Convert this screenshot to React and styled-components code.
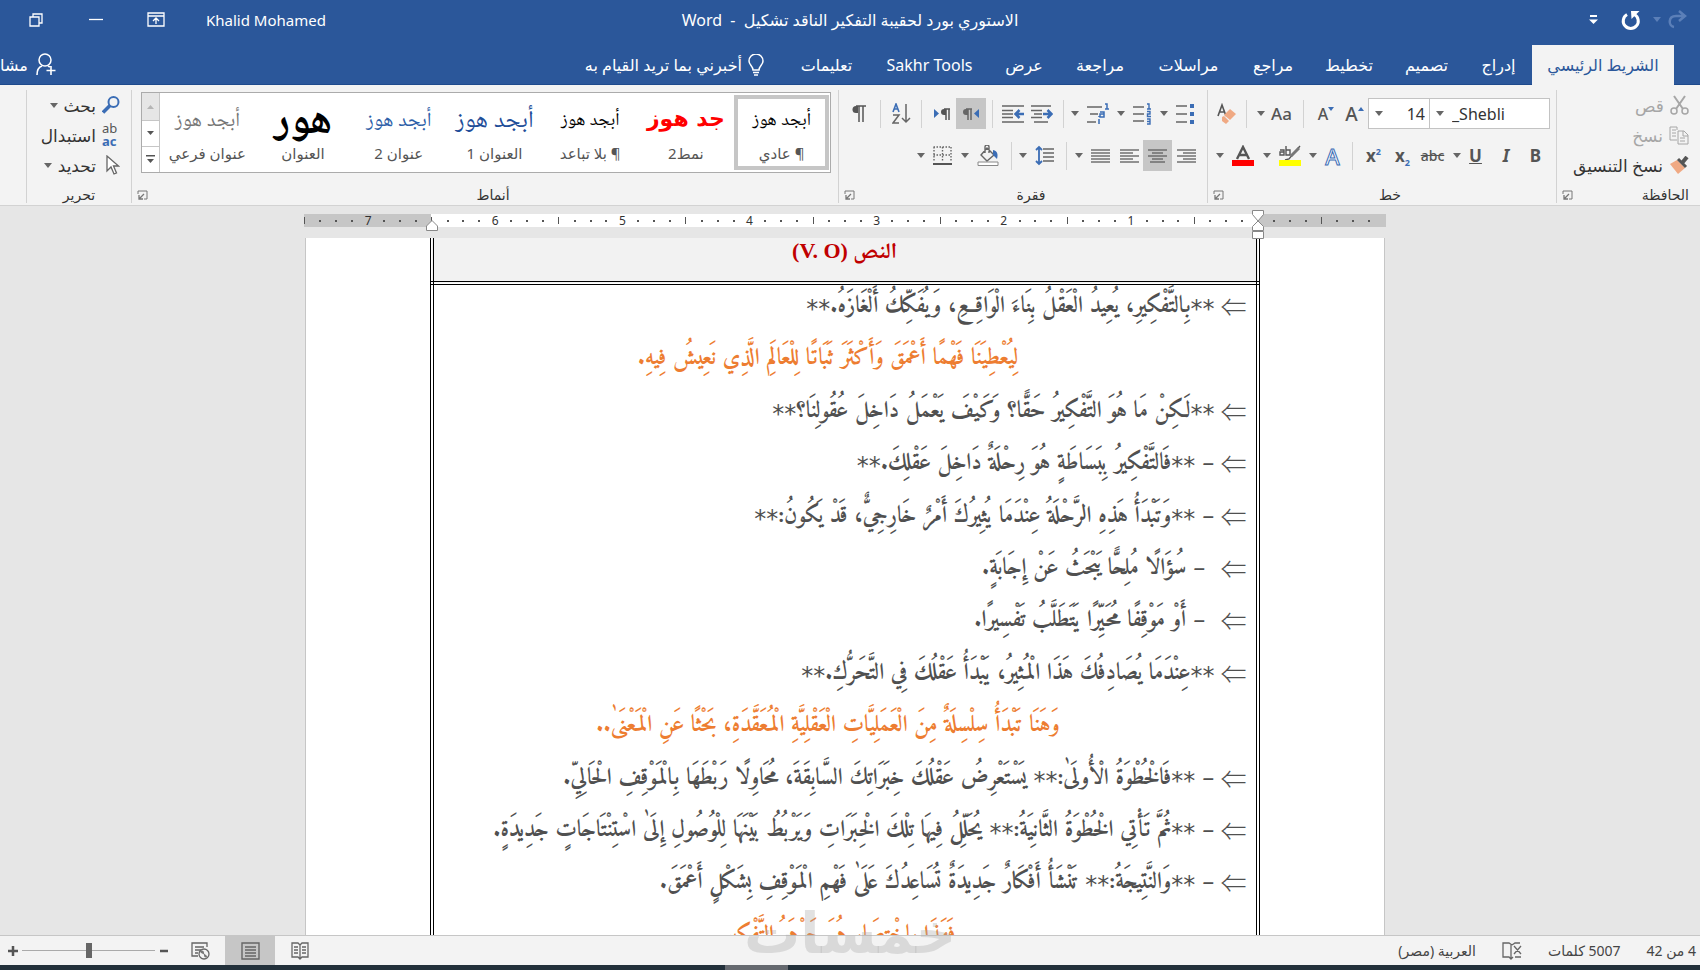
import { useState } from "react";
import styled, { createGlobalStyle } from "styled-components";

const GlobalStyle = createGlobalStyle`
  * {
    box-sizing: border-box;
  }
  body {
    margin: 0;
    overflow: hidden;
    font-family: "Noto Sans", "DejaVu Sans", sans-serif;
    font-size: 15px;
    color: #333;
  }
  button, select, input {
    font: inherit;
    color: inherit;
    margin: 0;
    padding: 0;
    border: none;
    background: none;
  }
`;

const tabs = [
  { label: "الشريط الرئيسي", width: 142 },
  { label: "إدراج", width: 67 },
  { label: "تصميم", width: 77 },
  { label: "تخطيط", width: 78 },
  { label: "مراجع", width: 74 },
  { label: "مراسلات", width: 95 },
  { label: "مراجعة", width: 82 },
  { label: "عرض", width: 70 },
  { label: "Sakhr Tools", width: 119 },
  { label: "تعليمات", width: 87 },
];

const styleItems = [
  { sample: "أبجد هوز", name: "¶ عادي", color: "#000", size: 18 },
  { sample: "جد هوز", name: "نمط2", color: "#f00", size: 22, sans: true },
  { sample: "أبجد هوز", name: "¶ بلا تباعد", color: "#000", size: 18 },
  { sample: "أبجد هوز", name: "العنوان 1", color: "#1f4e99", size: 24 },
  { sample: "أبجد هوز", name: "عنوان 2", color: "#2e5fa8", size: 20 },
  { sample: "هور", name: "العنوان", color: "#000", size: 42, bold: true },
  { sample: "أبجد هوز", name: "عنوان فرعي", color: "#767676", size: 20 },
];

const lines = [
  { text: "**بِالتَّفْكِيرِ، يُعِيدُ الْعَقْلُ بِنَاءَ الْوَاقِعِ، وَيُفَكِّكُ أَلْغَازَهُ.**" },
  { accent: true, text: "لِيُعْطِيَنَا فَهْمًا أَعْمَقَ وَأَكْثَرَ ثَبَاتًا لِلْعَالَمِ الَّذِي نَعِيشُ فِيهِ." },
  { text: "**لَكِنْ مَا هُوَ التَّفْكِيرُ حَقًّا؟ وَكَيْفَ يَعْمَلُ دَاخِلَ عُقُولِنَا؟**" },
  { text: "– **فَالتَّفْكِيرُ بِبَسَاطَةٍ هُوَ رِحْلَةٌ دَاخِلَ عَقْلِكَ.**" },
  { text: "– **وَتَبْدَأُ هَذِهِ الرَّحْلَةُ عِنْدَمَا يُثِيرُكَ أَمْرٌ خَارِجِيٌّ، قَدْ يَكُونُ:**" },
  { indent: true, text: "– سُؤَالًا مُلِحًّا يَبْحَثُ عَنْ إِجَابَةٍ." },
  { indent: true, text: "– أَوْ مَوْقِفًا مُحَيِّرًا يَتَطَلَّبُ تَفْسِيرًا." },
  { text: "**عِنْدَمَا يُصَادِفُكَ هَذَا الْمُثِيرُ، يَبْدَأُ عَقْلُكَ فِي التَّحَرُّكِ.**" },
  { accent: true, text: "وَهَنَا تَبْدَأُ سِلْسِلَةٌ مِنَ الْعَمَلِيَّاتِ الْعَقْلِيَّةِ الْمُعَقَّدَةِ، بَحْثًا عَنِ الْمَعْنَىٰ.." },
  { text: "– **فَالْخُطْوَةُ الْأُولَىٰ:** يَسْتَعْرِضُ عَقْلُكَ خِبَرَاتِكَ السَّابِقَةَ، مُحَاوِلًا رَبْطَهَا بِالْمَوْقِفِ الْحَالِيِّ." },
  { text: "– **ثُمَّ تَأْتِي الْخُطْوَةُ الثَّانِيَةُ:** يُحَلِّلُ فِيهَا تِلْكَ الْخِبَرَاتِ وَيَرْبُطُ بَيْنَهَا لِلْوُصُولِ إِلَىٰ اسْتِنْتَاجَاتٍ جَدِيدَةٍ." },
  { text: "– **وَالنَّتِيجَةُ:** تَنْشَأُ أَفْكَارٌ جَدِيدَةٌ تُسَاعِدُكَ عَلَىٰ فَهْمِ الْمَوْقِفِ بِشَكْلٍ أَعْمَقَ." },
  { accent: true, full: true, text: "فَهَذَا بِاخْتِصَارٍ هُوَ جَوْهَرُ التَّفْكِيرِ" },
];

// eighths of an inch, from the left end of the ruler to the right one
const marks = Array.from({ length: 68 }, (_, i) => 60 - i);

function Svg({ w = 20, h = 20, children, ...rest }) {
  return (
    <svg width={w} height={h} viewBox={`0 0 ${w} ${h}`} fill="none" aria-hidden="true" {...rest}>
      {children}
    </svg>
  );
}

function Arrow({ color = "#666" }) {
  return (
    <Svg w={8} h={5}>
      <path d="M0 0h8L4 5z" fill={color} />
    </Svg>
  );
}

function AlignIcon({ rows }) {
  return (
    <Svg w={19} h={16}>
      {rows.map(([x1, x2], i) => (
        <path key={i} d={`M${x1} ${i * 3 + 2}H${x2}`} stroke="#666" strokeWidth="1.4" />
      ))}
    </Svg>
  );
}

function IndentIcon({ out }) {
  return (
    <Svg w={22} h={20}>
      <path
        d={out ? "M0 2h22M0 6.500h11M0 10h11M0 13.500h11M0 18h22" : "M0 2h20M0 6.500h11M3 10h8M0 13.500h11M3 18h14"}
        stroke="#666"
        strokeWidth="1.500"
      />
      <path d={out ? "M22 10h-7M17.500 6l-4 4 4 4" : "M12 10h7M16.500 6l4 4-4 4"} stroke="#3b6db5" strokeWidth="2.500" />
    </Svg>
  );
}

function Launcher({ label }) {
  return (
    <LaunchButton aria-label={label}>
      <Svg w={11} h={10}>
        <path d="M1 4V1h9v8H7" stroke="#777" />
        <path d="M7 4L2 9M2 5v4h4" stroke="#777" strokeWidth="1.300" />
      </Svg>
    </LaunchButton>
  );
}

function TitleBar() {
  return (
    <Title>
      <QuickAccess>
        <IconButton $w={26} aria-label="إعادة">
          <Svg w={20} h={19}>
            <path d="M7 17C1 16 1 6 9 6h7M12 1l6 5-6 5" stroke="#5b7fb8" strokeWidth="2.500" />
          </Svg>
        </IconButton>
        <IconButton $w={14} aria-label="خيارات الإعادة">
          <Arrow color="#5b7fb8" />
        </IconButton>
        <IconButton $w={38} aria-label="تراجع">
          <Svg w={20} h={20}>
            <path d="M6 4.500a7.500 7.500 0 1 0 7.500 0" stroke="#fff" strokeWidth="3" />
            <path d="M10 1h8.500l-8 8z" fill="#fff" />
          </Svg>
        </IconButton>
        <IconButton $w={36} aria-label="تخصيص">
          <Svg w={10} h={10}>
            <path d="M1 1h7" stroke="#fff" strokeWidth="2" />
            <path d="M0 4.500h9L4.500 9z" fill="#fff" />
          </Svg>
        </IconButton>
      </QuickAccess>
      <DocName>الاستوري بورد لحقيبة التفكير الناقد تشكيل&nbsp; -&nbsp; Word</DocName>
      <WindowControls>
        <User>Khalid Mohamed</User>
        <IconButton $w={60} aria-label="عرض الشريط">
          <Svg w={18} h={15}>
            <path d="M1 1h16v13H1zM1 4h16M9 12V6M6 9l3-3 3 3" stroke="#fff" strokeWidth="1.300" />
          </Svg>
        </IconButton>
        <IconButton $w={60} aria-label="تصغير">
          <Svg w={14} h={3}>
            <path d="M0 1.500h14" stroke="#fff" strokeWidth="1.300" />
          </Svg>
        </IconButton>
        <IconButton $w={60} aria-label="استعادة">
          <Svg w={14} h={14}>
            <path d="M1 4h9v9H1zM4 4V1h9v9h-3" stroke="#fff" strokeWidth="1.300" />
          </Svg>
        </IconButton>
      </WindowControls>
    </Title>
  );
}

function TabBar() {
  const [active, setActive] = useState(0);
  return (
    <Tabs>
      {tabs.map((tab, i) => (
        <Tab key={tab.label} $w={tab.width} $active={i === active} onClick={() => setActive(i)}>
          {tab.label}
        </Tab>
      ))}
      <TellMe>
        <Svg w={16} h={22}>
          <path d="M5 16c0-4-4-5-4-9a7 7 0 0 1 14 0c0 4-4 5-4 9zM5 18.500h6M6 21h4" stroke="#fff" strokeWidth="1.500" />
        </Svg>
        أخبرني بما تريد القيام به
      </TellMe>
      <Share>
        <Svg w={20} h={23}>
          <circle cx="9" cy="7" r="6" stroke="#fff" strokeWidth="1.500" />
          <path d="M1 22c0-5 2-8 5-9M12 13l2 1M15 13v9M10.500 17.500h9" stroke="#fff" strokeWidth="1.600" />
        </Svg>
        مشا
      </Share>
    </Tabs>
  );
}

function ClipboardGroup() {
  return (
    <Group $w={144}>
      <Commands>
        <Command $disabled disabled>
          <Svg w={19} h={20}>
            <path d="M4 1l9 13M15 1L6 14" stroke="#a6a6a6" strokeWidth="2" />
            <circle cx="4" cy="16" r="3" stroke="#a6a6a6" strokeWidth="1.500" />
            <circle cx="15" cy="16" r="3" stroke="#a6a6a6" strokeWidth="1.500" />
          </Svg>
          قص
        </Command>
        <Command $disabled disabled>
          <Svg w={20} h={19}>
            <path d="M8 14H1V1h7v3M3 4h4M3 7h4M3 10h4M9 5h6l4 4v9H9zM14 5v5h5M11 12h5M11 15h5" stroke="#a6a6a6" />
          </Svg>
          نسخ
        </Command>
        <Command>
          <Svg w={20} h={19}>
            <path d="M8 4l8 8-7 6-8-10z" fill="#f0a983" />
            <path d="M9 3l8 8" stroke="#555" strokeWidth="3" />
            <path d="M13 7l5-6" stroke="#555" strokeWidth="4" />
          </Svg>
          نسخ التنسيق
        </Command>
      </Commands>
      <GroupFooter $start>
        <GroupLabel>الحافظة</GroupLabel>
        <Launcher label="الحافظة" />
      </GroupFooter>
    </Group>
  );
}

function FontGroup() {
  return (
    <Group $w={349}>
      <ToolRows $pad={6}>
        <ToolRow>
          <Combo $w={121}>
            <ComboSelect aria-label="الخط" dir="ltr">
              <option>_Shebli</option>
            </ComboSelect>
            <Arrow />
          </Combo>
          <Combo $w={62}>
            <ComboSelect $end aria-label="حجم الخط" dir="ltr">
              <option>14</option>
            </ComboSelect>
            <Arrow />
          </Combo>
          <Tool $w={27} aria-label="تكبير الخط">
            <Caret>
              <Svg w={6} h={4}><path d="M0 4h6L3 0z" fill="#3b6db5" /></Svg>
            </Caret>
            <Glyph $size={19}>A</Glyph>
          </Tool>
          <Tool $w={30} aria-label="تصغير الخط">
            <Caret>
              <Svg w={6} h={4}><path d="M0 0h6L3 4z" fill="#3b6db5" /></Svg>
            </Caret>
            <Glyph $size={16}>A</Glyph>
          </Tool>
          <Divider $w={15} />
          <Tool $w={43} aria-label="تغيير حالة الأحرف">
            <Glyph $size={17}>Aa</Glyph>
            <Arrow />
          </Tool>
          <Divider $w={13} />
          <Tool $w={26} aria-label="مسح التنسيق">
            <Svg w={20} h={22}>
              <path d="M1 13L5 2l4 11M2.500 9h5" stroke="#555" strokeWidth="1.600" />
              <path d="M13 6l6 5-6 6-6-5z" fill="#f0a983" />
              <path d="M5 14l2-1 5 5-3 3-4-3z" fill="#f0a983" />
            </Svg>
          </Tool>
        </ToolRow>
        <ToolRow>
          <Tool $w={29} aria-label="غامق"><Glyph $size={17} $bold>B</Glyph></Tool>
          <Tool $w={30} aria-label="مائل"><Glyph $size={17} $bold $italic>I</Glyph></Tool>
          <MenuTool $w={43} aria-label="تسطير"><Glyph $size={17} $bold $line="underline">U</Glyph><Arrow /></MenuTool>
          <Tool $w={31} aria-label="يتوسطه خط"><Glyph $size={14} $line="line-through">abc</Glyph></Tool>
          <Tool $w={29} aria-label="منخفض"><Glyph $size={17} $bold>x<sub>2</sub></Glyph></Tool>
          <Tool $w={29} aria-label="مرتفع"><Glyph $size={17} $bold>x<sup>2</sup></Glyph></Tool>
          <Divider $w={13} />
          <MenuTool $w={39} aria-label="تأثيرات النص"><Glyph $size={22} $outlined>A</Glyph><Arrow /></MenuTool>
          <MenuTool $w={47} aria-label="لون التمييز">
            <Svg w={22} h={21}>
              <path d="M1 5h4v5H1V7h4M7 1v9h4V5H7M21 1L10 14l-4 1" stroke="#555" strokeWidth="1.400" />
              <path d="M20 3l-8 8" stroke="#777" strokeWidth="3" />
              <path d="M0 15h22v6H0z" fill="#ff0" />
            </Svg>
            <Arrow />
          </MenuTool>
          <MenuTool $w={47} aria-label="لون الخط">
            <Svg w={22} h={21}>
              <path d="M5 14L11 2l6 12M7 10h8" stroke="#555" strokeWidth="2.400" />
              <path d="M0 15h22v6H0z" fill="#f00" />
            </Svg>
            <Arrow />
          </MenuTool>
        </ToolRow>
      </ToolRows>
      <GroupFooter>
        <GroupLabel>خط</GroupLabel>
        <Launcher label="خط" />
      </GroupFooter>
    </Group>
  );
}

function ParagraphGroup() {
  return (
    <Group $w={369}>
      <ToolRows $pad={7}>
        <ToolRow>
          <MenuTool $w={42} aria-label="تعداد نقطي">
            <Svg w={18} h={20}>
              <path d="M0 2h11M0 10h11M0 18h11" stroke="#666" strokeWidth="1.500" />
              <path d="M14 0h4v4h-4zM14 8h4v4h-4zM14 16h4v4h-4z" fill="#3b6db5" />
            </Svg>
            <Arrow />
          </MenuTool>
          <MenuTool $w={45} aria-label="تعداد رقمي">
            <Svg w={18} h={22}>
              <path d="M0 4h11M0 11h11M0 18h11" stroke="#666" strokeWidth="1.500" />
              <path d="M14 1h2v5M14 6h4M14 8.500h3v2.500h-2.500v2.500H18M14 16h3v5h-3M14 18.500h3" stroke="#3b6db5" strokeWidth="1.400" />
            </Svg>
            <Arrow />
          </MenuTool>
          <MenuTool $w={42} aria-label="قائمة متعددة المستويات">
            <Svg w={22} h={22}>
              <path d="M0 4h15M3 11h8M0 19h9" stroke="#666" strokeWidth="1.500" />
              <path d="M18 1h2v5M18 6h4M13 9h4v5h-4v-3h4M12 16v5M12 13v1" stroke="#3b6db5" strokeWidth="1.500" />
            </Svg>
            <Arrow />
          </MenuTool>
          <Divider $w={15} />
          <Tool $w={29} aria-label="إنقاص المسافة"><IndentIcon /></Tool>
          <Tool $w={29} aria-label="زيادة المسافة"><IndentIcon out /></Tool>
          <Divider $w={12} />
          <Tool $w={30} $on aria-label="من اليمين إلى اليسار">
            <Svg w={18} h={14}>
              <path d="M6 8H4a3 3 0 0 1 0-6h2z" fill="#666" />
              <path d="M10 2H4M6 2v11M9 2v11" stroke="#666" strokeWidth="1.500" />
              <path d="M17 2v9l-5-4.500z" fill="#3b6db5" />
            </Svg>
          </Tool>
          <Tool $w={29} aria-label="من اليسار إلى اليمين">
            <Svg w={18} h={14}>
              <path d="M13 8h-2a3 3 0 0 1 0-6h2z" fill="#555" />
              <path d="M17 2h-6M13 2v11M16 2v11" stroke="#555" strokeWidth="1.500" />
              <path d="M1 2v9l5-4.500z" fill="#3b6db5" />
            </Svg>
          </Tool>
          <Divider $w={11} />
          <Tool $w={30} aria-label="فرز">
            <Svg w={19} h={21}>
              <path d="M1 9l3-8 3 8M2 6h4" stroke="#3b6db5" strokeWidth="1.600" />
              <path d="M1 12h6l-6 8h6M14 1v18M10 15l4 4 4-4" stroke="#666" strokeWidth="1.500" />
            </Svg>
          </Tool>
          <Divider $w={12} />
          <Tool $w={30} aria-label="إظهار الكل">
            <Svg w={14} h={17}>
              <path d="M6 8H4a3.500 3.500 0 0 1 0-7h2z" fill="#555" />
              <path d="M14 1H4M7 1v16M11 1v16" stroke="#555" strokeWidth="1.500" />
            </Svg>
          </Tool>
        </ToolRow>
        <ToolRow>
          <Tool $w={28} aria-label="محاذاة لليمين"><AlignIcon rows={[[0, 19], [6, 19], [0, 19], [6, 19], [0, 19]]} /></Tool>
          <Tool $w={29} $on aria-label="توسيط"><AlignIcon rows={[[0, 19], [4, 15], [0, 19], [4, 15], [2, 17]]} /></Tool>
          <Tool $w={28} aria-label="محاذاة لليسار"><AlignIcon rows={[[0, 19], [0, 13], [0, 19], [0, 13], [0, 19]]} /></Tool>
          <MenuTool $w={41} aria-label="ضبط"><AlignIcon rows={[[0, 19], [0, 19], [0, 19], [0, 19], [0, 19]]} /><Arrow /></MenuTool>
          <Divider $w={16} />
          <MenuTool $w={40} aria-label="تباعد الأسطر">
            <Svg w={19} h={21}>
              <path d="M4 2v17M1 5l3-3 3 3M1 16l3 3 3-3" stroke="#3b6db5" strokeWidth="1.800" />
              <path d="M8 4h11M8 8h11M8 12h11M8 16h11" stroke="#666" strokeWidth="1.500" />
            </Svg>
            <Arrow />
          </MenuTool>
          <Divider $w={14} />
          <MenuTool $w={45} aria-label="تظليل">
            <Svg w={22} h={21}>
              <path d="M10 3l7 7-7 6-6-6zM8 8V2a2 2 0 0 1 4 0v6" stroke="#666" strokeWidth="1.400" />
              <path d="M16 5c5 1 5 5 4 9l-4-4z" fill="#3b6db5" />
              <path d="M1 17h20v3.500H1z" fill="#fff" stroke="#888" />
            </Svg>
            <Arrow />
          </MenuTool>
          <MenuTool $w={45} aria-label="حدود">
            <Svg w={19} h={19}>
              <path d="M.5 1h18M.5 9h18M1 1v15M9.500 1v15M18 1v15" stroke="#666" strokeWidth="1.400" strokeDasharray="1.500 1.500" />
              <path d="M0 18h19" stroke="#555" strokeWidth="2" />
            </Svg>
            <Arrow />
          </MenuTool>
        </ToolRow>
      </ToolRows>
      <GroupFooter>
        <GroupLabel>فقرة</GroupLabel>
        <Launcher label="فقرة" />
      </GroupFooter>
    </Group>
  );
}

function StylesGroup() {
  const [current, setCurrent] = useState(0);
  return (
    <Group $grow>
      <Gallery>
        {styleItems.map((item, i) => (
          <StyleButton key={item.name} $on={i === current} onClick={() => setCurrent(i)}>
            <Sample $color={item.color} $size={item.size} $sans={item.sans} $bold={item.bold || item.sans}>
              {item.sample}
            </Sample>
            <span>{item.name}</span>
          </StyleButton>
        ))}
        <GalleryScroll>
          <button disabled aria-label="لأعلى">
            <Svg w={7} h={4}><path d="M0 4h7L3.500 0z" fill="#b5b5b5" /></Svg>
          </button>
          <button aria-label="لأسفل">
            <Svg w={7} h={4}><path d="M0 0h7L3.500 4z" fill="#555" /></Svg>
          </button>
          <button aria-label="المزيد">
            <Svg w={9} h={8}><path d="M0 0h9v1.500H0zM1 4h7L4.500 8z" fill="#555" /></Svg>
          </button>
        </GalleryScroll>
      </Gallery>
      <GroupFooter>
        <GroupLabel>أنماط</GroupLabel>
        <Launcher label="أنماط" />
      </GroupFooter>
    </Group>
  );
}

function EditingGroup() {
  return (
    <Group $w={105}>
      <Commands>
        <Command>
          <Svg w={18} h={18}>
            <circle cx="11.500" cy="6" r="5" stroke="#3b6db5" strokeWidth="2" />
            <path d="M8 9.500L1 16.500" stroke="#3b6db5" strokeWidth="3.500" />
          </Svg>
          بحث
          <Arrow />
        </Command>
        <Command>
          <ReplaceGlyph>
            <span>ab</span>
            <b>ac</b>
          </ReplaceGlyph>
          استبدال
        </Command>
        <Command>
          <Svg w={18} h={20}>
            <path d="M5 1v15l4-4 3 7 2.500-1-3-7h5z" stroke="#666" strokeWidth="1.300" fill="#fff" />
          </Svg>
          تحديد
          <Arrow />
        </Command>
      </Commands>
      <GroupFooter>
        <GroupLabel>تحرير</GroupLabel>
      </GroupFooter>
    </Group>
  );
}

function Ruler() {
  return (
    <RulerBar>
      <RulerMarks>
        {marks.map((m) => (
          <Mark key={m}>
            {m === 0 ? null : m > 0 && m % 8 === 0 ? m / 8 : <Tick $tall={m % 4 === 0} />}
            {m === 0 && (
              <Handle>
                <Svg w={12} h={29}>
                  <path d="M.5.5h11v4L6 11 .5 4.500zM.5 20.500v-4L6 11l5.500 5.500v4zM.5 21.500h11v7H.5z" fill="#fff" stroke="#888" />
                </Svg>
              </Handle>
            )}
            {m === 52 && (
              <Handle $low>
                <Svg w={12} h={11}>
                  <path d="M.5 10.500V6L6 .5 11.500 6v4.500z" fill="#fff" stroke="#888" />
                </Svg>
              </Handle>
            )}
          </Mark>
        ))}
      </RulerMarks>
    </RulerBar>
  );
}

function Line({ line }) {
  // the ornamental stars are set apart from the words round them
  const parts = line.text.split(/(\*\*)/).filter(Boolean);
  const body = parts.map((part, i) => (part === "**" ? <Stars key={i}>{part}</Stars> : part));
  if (line.accent) {
    return <AccentLine $full={line.full}>{body}</AccentLine>;
  }
  return (
    <BulletLine>
      <Bullet>⇐</Bullet>
      <LineText $indent={line.indent}>{body}</LineText>
    </BulletLine>
  );
}

function StatusBar() {
  const [zoom, setZoom] = useState(50);
  return (
    <Status>
      <StatusInfo>
        <span>4 من 42</span>
        <span>5007 كلمات</span>
        <Svg w={20} h={18}>
          <path d="M10 3L7 1H1v14h6l2 2 2-2M9 3v13M10 3l3-2h5M13 15h6M12 4l7 8M19 4l-7 8" stroke="#666" strokeWidth="1.300" />
        </Svg>
        <span>العربية (مصر)</span>
      </StatusInfo>
      <ViewButton aria-label="وضع القراءة">
        <Svg w={18} h={18}>
          <path d="M9 3L7 1H1v14h6l2 2 2-2h6V1h-6zM9 3v14M3 5h4M3 8h4M3 11h4M11 5h4M11 8h4M11 11h4" stroke="#666" strokeWidth="1.300" />
        </Svg>
      </ViewButton>
      <ViewButton $on aria-label="تخطيط الطباعة">
        <Svg w={19} h={18}>
          <path d="M1 1h17v16H1zM4 5h11M4 8h11M4 11h11M4 14h11" stroke="#666" strokeWidth="1.400" />
        </Svg>
      </ViewButton>
      <ViewButton aria-label="تخطيط ويب">
        <Svg w={19} h={18}>
          <path d="M7 14H1V1h15v4M4 5h9M4 8h6M4 11h3" stroke="#666" strokeWidth="1.300" />
          <circle cx="13" cy="12" r="5" stroke="#666" strokeWidth="1.300" />
          <path d="M9 9c3-1 4 0 4 2s3 1 3 4c-2 1-3 0-3-2s-4-1-4-4z" fill="#777" />
        </Svg>
      </ViewButton>
      <ZoomControl>
        <button aria-label="تصغير">
          <Svg w={10} h={10}><path d="M1 5h8" stroke="#555" strokeWidth="2.500" /></Svg>
        </button>
        <ZoomRange
          type="range"
          aria-label="تكبير"
          value={zoom}
          onChange={(e) => setZoom(Number(e.target.value))}
        />
        <button aria-label="تكبير">
          <Svg w={10} h={10}><path d="M0 5h10M5 0v10" stroke="#555" strokeWidth="2.500" /></Svg>
        </button>
      </ZoomControl>
    </Status>
  );
}

export default function App() {
  return (
    <Window dir="rtl">
      <GlobalStyle />
      <TitleBar />
      <TabBar />
      <Ribbon>
        <ClipboardGroup />
        <FontGroup />
        <ParagraphGroup />
        <StylesGroup />
        <EditingGroup />
      </Ribbon>
      <Workspace>
        <Ruler />
        <Page>
          <DocTable>
            <thead>
              <tr>
                <th>النص (V. O)</th>
              </tr>
            </thead>
            <tbody>
              <tr>
                <td>
                  <Lines>
                    {lines.map((line) => (
                      <Line key={line.text} line={line} />
                    ))}
                  </Lines>
                </td>
              </tr>
            </tbody>
          </DocTable>
        </Page>
      </Workspace>
      <StatusBar />
      <Taskbar>
        <TaskItem />
      </Taskbar>
      <Watermark>خمسات</Watermark>
    </Window>
  );
}

const Window = styled.div`
  position: relative;
  display: flex;
  flex-direction: column;
  height: 100vh;
  overflow: hidden;
  background: #e6e6e6;
`;

const Title = styled.header`
  display: grid;
  grid-template-columns: 1fr auto 1fr;
  align-items: center;
  height: 45px;
  padding-bottom: 6px;
  background: #2b579a;
  color: #fff;
  font-size: 16px;
`;
const QuickAccess = styled.div`
  display: flex;
  align-items: center;
  padding-right: 10px;
`;
const DocName = styled.h1`
  margin: 0;
  font-size: 16px;
  font-weight: normal;
`;
const WindowControls = styled.div`
  display: flex;
  align-items: center;
  justify-content: flex-end;
  padding-left: 6px;
`;
const User = styled.span`
  margin-left: 20px;
  font-size: 15px;
`;
const IconButton = styled.button`
  display: flex;
  align-items: center;
  justify-content: center;
  width: ${(p) => p.$w}px;
  height: 32px;
`;

const Tabs = styled.nav`
  display: flex;
  height: 40px;
  padding-right: 26px;
  background: #2b579a;
  border-bottom: 1px solid #1e4a8c;
  color: #fff;
  font-size: 16px;
  white-space: nowrap;
`;
const Tab = styled.button`
  width: ${(p) => p.$w}px;
  height: 40px;
  background: ${(p) => (p.$active ? "#f3f3f3" : "none")};
  color: ${(p) => (p.$active ? "#2b579a" : "#fff")};
`;
const TellMe = styled.button`
  display: flex;
  align-items: center;
  gap: 6px;
  padding-right: 19px;
`;
const Share = styled.button`
  display: flex;
  align-items: center;
  gap: 8px;
  margin-right: auto;
`;

const Ribbon = styled.section`
  display: flex;
  height: 121px;
  padding: 5px 0 2px 26px;
  background: #f3f3f3;
  border-bottom: 1px solid #d2d2d2;
`;
const Group = styled.div`
  display: flex;
  flex-direction: column;
  flex: ${(p) => (p.$grow ? "1" : "none")};
  width: ${(p) => (p.$w ? `${p.$w}px` : "auto")};
  min-width: 0;
  border-left: 1px solid #d2d2d2;
`;
const Commands = styled.div`
  display: flex;
  flex-direction: column;
  padding-right: 11px;
`;
const Command = styled.button`
  display: flex;
  align-items: center;
  gap: 6px;
  height: 30px;
  font-size: 17px;
  white-space: nowrap;
  color: ${(p) => (p.$disabled ? "#a6a6a6" : "#333")};
  svg {
    flex: none;
  }
`;
const GroupFooter = styled.div`
  display: flex;
  align-items: center;
  margin-top: auto;
  height: 16px;
  padding-right: ${(p) => (p.$start ? 11 : 0)}px;
  text-align: ${(p) => (p.$start ? "right" : "center")};
`;
const GroupLabel = styled.span`
  flex: 1;
  font-size: 14px;
  line-height: 16px;
`;
const LaunchButton = styled.button`
  display: flex;
  margin-left: 5px;
`;
const ReplaceGlyph = styled.span`
  display: flex;
  flex-direction: column;
  align-items: flex-end;
  width: 18px;
  font-size: 13px;
  line-height: 13px;
  color: #555;
  b {
    color: #3b6db5;
  }
`;

const ToolRows = styled.div`
  display: flex;
  flex-direction: column;
  gap: 11px;
  padding-top: 8px;
  padding-right: ${(p) => p.$pad}px;
`;
const ToolRow = styled.div`
  display: flex;
  height: 31px;
`;
const Tool = styled.button`
  display: flex;
  align-items: center;
  justify-content: center;
  gap: 6px;
  width: ${(p) => p.$w}px;
  background: ${(p) => (p.$on ? "#c6c6c6" : "none")};
  svg {
    flex: none;
  }
`;
const MenuTool = styled(Tool)`
  gap: 8px;
  padding-right: 4px;
`;
const Divider = styled.span`
  width: ${(p) => p.$w}px;
  background: linear-gradient(#d2d2d2, #d2d2d2) center / 1px 28px no-repeat;
`;
const Glyph = styled.span`
  font-size: ${(p) => p.$size}px;
  line-height: 20px;
  font-weight: ${(p) => (p.$bold ? "bold" : "500")};
  font-style: ${(p) => (p.$italic ? "italic" : "normal")};
  text-decoration: ${(p) => p.$line || "none"};
  color: ${(p) => (p.$outlined ? "#fff" : "#555")};
  -webkit-text-stroke: ${(p) => (p.$outlined ? "1px #3b6db5" : "0")};
  direction: ltr;
  sub, sup {
    font-size: 9px;
    line-height: 0;
    color: #3b6db5;
  }
`;
const Caret = styled.span`
  align-self: flex-start;
  margin: 5px 0 0 -6px;
  line-height: 4px;
`;
const Combo = styled.div`
  display: flex;
  align-items: center;
  width: ${(p) => p.$w}px;
  margin-left: -1px;
  padding-left: 6px;
  background: #fff;
  border: 1px solid #c3c3c3;
  &:nth-child(2) {
    margin-left: 0;
  }
`;
const ComboSelect = styled.select`
  flex: 1;
  min-width: 0;
  height: 29px;
  padding: 0 ${(p) => (p.$end ? 4 : 8)}px;
  appearance: none;
  outline: none;
  font-size: 16px;
  text-align-last: ${(p) => (p.$end ? "right" : "left")};
`;

const Gallery = styled.div`
  display: flex;
  height: 81px;
  margin: 2px 7px 0 9px;
  background: #fff;
  border: 1px solid #ababab;
`;
const StyleButton = styled.button`
  display: flex;
  flex: 1;
  min-width: 0;
  flex-direction: column;
  align-items: center;
  justify-content: flex-end;
  gap: 10px;
  margin: 2px 1px 2px 0;
  padding-bottom: 3px;
  border: 4px solid ${(p) => (p.$on ? "#c6c6c6" : "transparent")};
  font-size: 15px;
  line-height: 20px;
  color: #555;
  white-space: nowrap;
`;
const Sample = styled.span`
  font-family: ${(p) => (p.$sans ? '"DejaVu Sans"' : '"Liberation Serif", "Noto Naskh Arabic"')}, serif;
  font-size: ${(p) => p.$size}px;
  font-weight: ${(p) => (p.$bold ? "bold" : "normal")};
  line-height: 28px;
  color: ${(p) => p.$color};
`;
const GalleryScroll = styled.div`
  display: grid;
  grid-template-rows: 28px 1fr 1fr;
  width: 18px;
  border-right: 1px solid #c6c6c6;
  button {
    display: flex;
    align-items: center;
    justify-content: center;
    border-bottom: 1px solid #c6c6c6;
  }
  button:disabled {
    background: #e6e6e6;
  }
  button:last-child {
    border-bottom: none;
  }
`;

const Workspace = styled.main`
  display: flex;
  flex: 1;
  flex-direction: column;
  align-items: center;
  min-height: 0;
  padding-right: 11px;
  direction: ltr;
`;
const RulerBar = styled.div`
  width: 1082px;
  height: 13px;
  margin: 8px 0 11px;
  background: linear-gradient(to right, #c6c6c6 127px, #fff 127px, #fff 955px, #c6c6c6 955px);
`;
const RulerMarks = styled.div`
  display: flex;
  align-items: center;
  justify-content: space-between;
  height: 13px;
  padding: 0 16px 0 1px;
  font-size: 12px;
  line-height: 13px;
`;
const Mark = styled.span`
  position: relative;
  display: flex;
  align-items: center;
  justify-content: center;
  width: 0;
  height: 13px;
`;
const Tick = styled.i`
  flex: none;
  width: ${(p) => (p.$tall ? 1 : 2)}px;
  height: ${(p) => (p.$tall ? 7 : 2)}px;
  background: #555;
`;
const Handle = styled.span`
  position: absolute;
  top: ${(p) => (p.$low ? 6 : -4)}px;
  left: -6px;
  line-height: 0;
`;
const Page = styled.article`
  width: 1080px;
  flex: 1;
  min-height: 0;
  padding: 0 124px;
  overflow: hidden;
  background: #fff;
  border: solid #c6c6c6;
  border-width: 0 1px;
`;
const DocTable = styled.table`
  width: 100%;
  border-collapse: collapse;
  direction: rtl;
  th, td {
    padding: 0;
    border: 4px double #000;
    border-top: none;
  }
  th {
    height: 45px;
    padding-bottom: 18px;
    background: #f2f2f2;
    color: #c00000;
    font-family: "Liberation Serif", "Noto Naskh Arabic", serif;
    font-size: 22px;
    line-height: 24px;
  }
`;
const Lines = styled.div`
  display: flex;
  flex-direction: column;
  justify-content: space-between;
  height: 671px;
  padding-right: 9px;
  font-family: "Amiri", "Noto Naskh Arabic", serif;
  font-size: 23px;
  font-weight: bold;
  line-height: 44px;
  color: #505050;
  white-space: nowrap;
`;
const BulletLine = styled.p`
  display: flex;
  height: 42px;
  margin: 0;
`;
const Bullet = styled.span`
  width: 32px;
  font-family: "Noto Sans CJK SC", sans-serif;
  font-size: 26px;
  font-weight: 300;
  line-height: 41px;
`;
const LineText = styled.span`
  padding-right: ${(p) => (p.$indent ? 9 : 0)}px;
`;
const AccentLine = styled.p`
  height: 42px;
  margin: 0 ${(p) => (p.$full ? 0 : 24)}px 0 0;
  text-align: center;
  color: #ed7d31;
`;
const Stars = styled.span`
  font-family: "DejaVu Sans", sans-serif;
  font-size: 24px;
  font-weight: normal;
  line-height: 0;
  vertical-align: -5px;
`;

const Status = styled.footer`
  display: flex;
  align-items: center;
  height: 30px;
  flex: none;
  background: #f3f3f3;
  border-top: 1px solid #c6c6c6;
  font-size: 14px;
  color: #444;
`;
const StatusInfo = styled.div`
  display: flex;
  align-items: center;
  gap: 26px;
  flex: 1;
  padding-right: 4px;
`;
const ViewButton = styled.button`
  display: flex;
  align-items: center;
  justify-content: center;
  width: 50px;
  height: 29px;
  background: ${(p) => (p.$on ? "#c6c6c6" : "none")};
`;
const ZoomControl = styled.div`
  display: flex;
  align-items: center;
  gap: 4px;
  padding: 0 6px 0 8px;
  button {
    display: flex;
  }
`;
const ZoomRange = styled.input`
  width: 133px;
  height: 16px;
  appearance: none;
  background: linear-gradient(#aaa, #aaa) center / 100% 1px no-repeat;
  &::-webkit-slider-thumb {
    appearance: none;
    width: 6px;
    height: 15px;
    background: #666;
  }
`;
const Taskbar = styled.div`
  flex: none;
  height: 5px;
  padding-left: 725px;
  background: #22303a;
  direction: ltr;
`;
const TaskItem = styled.div`
  width: 63px;
  height: 5px;
  background: #65696f;
`;
const Watermark = styled.div`
  position: absolute;
  left: 50%;
  bottom: 8px;
  transform: translateX(-50%);
  font-family: "DejaVu Sans", sans-serif;
  font-size: 56px;
  font-weight: bold;
  line-height: 56px;
  color: rgba(170, 170, 170, 0.35);
  pointer-events: none;
`;
